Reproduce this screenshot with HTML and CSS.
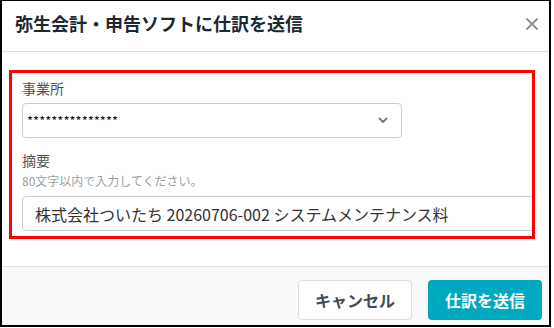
FILE: index.html
```html
<!DOCTYPE html>
<html lang="ja">
<head>
  <meta charset="UTF-8" />
  <meta name="viewport" content="width=device-width, initial-scale=1.0" />
  <title>弥生会計・申告ソフトに仕訳を送信</title>
  <link rel="stylesheet" href="styles.css">
</head>
<body>

  <div class="dialog">
    <div class="dialog-header">
      <h2>弥生会計・申告ソフトに仕訳を送信</h2>
      <button class="close-btn" aria-label="閉じる">
        <svg width="12" height="12" viewBox="0 0 12 12">
          <path d="M1 1 L11 11 M11 1 L1 11" stroke="#8a8f96" stroke-width="1.8" stroke-linecap="round" fill="none" />
        </svg>
      </button>
    </div>

    <div class="dialog-body">
      <div class="highlight">
        <div class="field">
          <label>事業所</label>
          <div class="select-box">
            <span>***************</span>
            <svg width="10" height="7" viewBox="0 0 10 7">
              <path d="M1.5 1.5 L5 5 L8.5 1.5" stroke="#6f757d" stroke-width="1.8" stroke-linecap="round" stroke-linejoin="round" fill="none" />
            </svg>
          </div>
        </div>
        <div class="field field-memo">
          <label>摘要</label>
          <p class="hint">80文字以内で入力してください。</p>
          <input type="text" value="株式会社ついたち 20260706-002 システムメンテナンス料" />
        </div>
      </div>
    </div>

    <div class="dialog-footer">
      <button class="btn btn-cancel">キャンセル</button>
      <button class="btn btn-submit">仕訳を送信</button>
    </div>
  </div>

</body>
</html>
```

FILE: styles.css
```css
body {
  margin: 0;
  font-family: 'Noto Sans CJK JP', 'Noto Sans', sans-serif;
  background-color: #fff;
  color: #333;
}

.dialog {
  width: 551px;
  height: 327px;
  box-sizing: border-box;
  border: 2px solid #000;
  border-top-width: 1px;
  background-color: #fff;
  display: flex;
  flex-direction: column;
  overflow: hidden;
}

.dialog-header {
  display: flex;
  justify-content: space-between;
  align-items: flex-start;
  padding: 10px 11px 0 13px;
  height: 51px;
  box-sizing: border-box;
  border-bottom: 1px solid #dde1e7;
}

.dialog-header h2 {
  margin: 0;
  font-size: 18px;
  line-height: 24px;
  font-weight: 700;
  color: #1e2833;
}

.close-btn {
  background: none;
  border: none;
  padding: 0;
  margin-top: 7px;
  width: 12px;
  height: 12px;
  cursor: pointer;
  display: flex;
}

.dialog-body {
  padding: 18px 0 0 7px;
  height: 215px;
  box-sizing: border-box;
  border-bottom: 1px solid #dde1e7;
}

.highlight {
  width: 526px;
  box-sizing: border-box;
  border: 3px solid #ff0000;
  padding: 6px 0 5px 10px;
  overflow: hidden;
}

.field label {
  display: block;
  font-size: 14px;
  line-height: 19px;
  color: #4b535c;
  margin-bottom: 5px;
}

.select-box {
  width: 380px;
  height: 35px;
  box-sizing: border-box;
  border: 1px solid #c9ced5;
  border-radius: 4px;
  display: flex;
  align-items: center;
  justify-content: space-between;
  padding: 0 13px 0 4px;
  font-size: 13px;
  color: #111;
}

.field-memo {
  margin-top: 13px;
}

.field-memo label {
  margin-bottom: 3px;
}

.hint {
  margin: 0 0 7px;
  font-size: 12px;
  line-height: 16px;
  color: #9a9fa5;
}

input {
  width: 540px;
  height: 35px;
  box-sizing: border-box;
  padding: 0 12px;
  border: 1px solid #c9ced5;
  border-radius: 4px;
  font-family: 'Noto Sans CJK JP', 'Noto Sans', sans-serif;
  font-size: 16px;
  color: #333;
}

.dialog-footer {
  flex: 1;
  background-color: #f8f9fb;
  display: flex;
  justify-content: flex-end;
  gap: 16px;
  padding: 13px 7px 0 0;
}

.btn {
  width: 114px;
  height: 40px;
  border-radius: 4px;
  font-family: 'Noto Sans CJK JP', 'Noto Sans', sans-serif;
  font-size: 16px;
  font-weight: 700;
  cursor: pointer;
}

.btn-cancel {
  background-color: #fff;
  border: 1px solid #dadde2;
  color: #444b52;
}

.btn-submit {
  background-color: #00a9bf;
  border: none;
  color: #fff;
}
```
